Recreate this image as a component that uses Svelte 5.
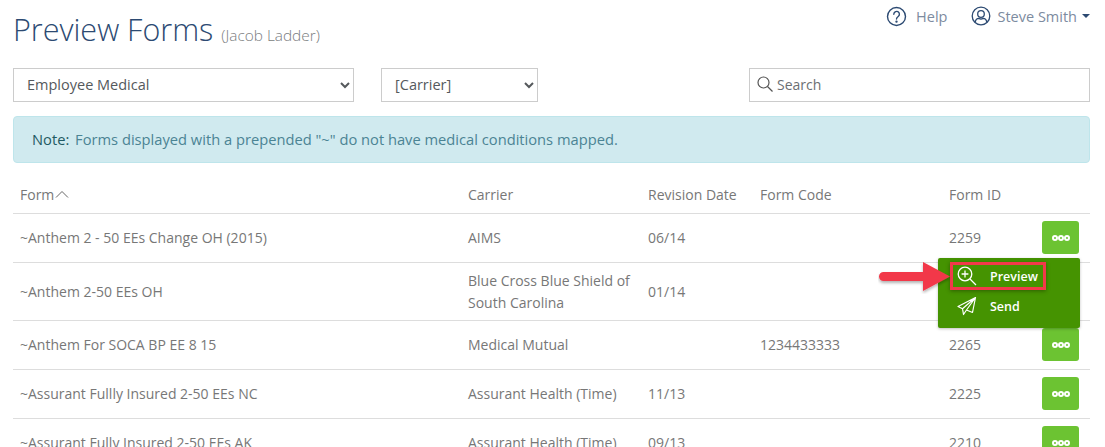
<script>
  const rows = [
    { form: '~Anthem 2 - 50 EEs Change OH (2015)', carrier: 'AIMS', date: '06/14', code: '', id: '2259' },
    { form: '~Anthem 2-50 EEs OH', carrier: 'Blue Cross Blue Shield of South Carolina', date: '01/14', code: '', id: '', open: true },
    { form: '~Anthem For SOCA BP EE 8 15', carrier: 'Medical Mutual', date: '', code: '1234433333', id: '2265' },
    { form: '~Assurant Fullly Insured 2-50 EEs NC', carrier: 'Assurant Health (Time)', date: '11/13', code: '', id: '2225' },
    { form: '~Assurant Fully Insured 2-50 EEs AK', carrier: 'Assurant Health (Time)', date: '09/13', code: '', id: '2210' }
  ];
</script>

<div class="page">
  <header class="top">
    <h1>Preview Forms <small>(Jacob Ladder)</small></h1>
    <nav class="usernav">
      <span class="navitem help">
        <svg width="21" height="21" viewBox="0 0 21 21" fill="none" stroke="#2c4a72" stroke-width="1.4">
          <circle cx="10.5" cy="10.5" r="9" />
          <path d="M7.8 8.2a2.8 2.8 0 1 1 4.4 2.3c-1 .7-1.7 1.2-1.7 2.5" stroke-linecap="round" />
          <circle cx="10.5" cy="15.6" r=".5" fill="#2c4a72" />
        </svg>
        Help
      </span>
      <span class="navitem">
        <svg width="20" height="20" viewBox="0 0 20 20" fill="none" stroke="#2c4a72" stroke-width="1.3">
          <circle cx="10" cy="10" r="8.8" />
          <circle cx="10" cy="8" r="3.3" />
          <path d="M4.2 16c.6-2.6 2.4-3.6 3.6-3.6.8.4 1.400.6 2.200.6s1.400-.2 2.200-.6c1.200 0 3 1 3.600 3.600" />
        </svg>
        Steve Smith<i class="caret"></i>
      </span>
    </nav>
  </header>

  <div class="filters">
    <select class="plan"><option>Employee Medical</option></select>
    <select class="carrier"><option>[Carrier]</option></select>
    <div class="search">
      <svg width="16" height="16" viewBox="0 0 16 16" fill="none" stroke="#555" stroke-width="1.2">
        <circle cx="6.500" cy="6.500" r="5.500" />
        <path d="M10.500 10.500l5 5" />
      </svg>
      <input placeholder="Search" />
    </div>
  </div>

  <div class="note"><b>Note:</b> Forms displayed with a prepended "~" do not have medical conditions mapped.</div>

  <table>
    <colgroup>
      <col style="width:448px" />
      <col style="width:180px" />
      <col style="width:112px" />
      <col style="width:189px" />
      <col style="width:88px" />
      <col />
    </colgroup>
    <thead>
      <tr>
        <th>Form<svg class="sort" width="14" height="8" viewBox="0 0 14 8" fill="none" stroke="#666"><path d="M1 7.500l6-6 6 6" /></svg></th>
        <th>Carrier</th>
        <th>Revision Date</th>
        <th>Form Code</th>
        <th>Form ID</th>
        <th></th>
      </tr>
    </thead>
    <tbody>
      {#each rows as row}
        <tr>
          <td>{row.form}</td>
          <td>{row.carrier}</td>
          <td>{row.date}</td>
          <td>{row.code}</td>
          <td>{row.id}</td>
          <td class="action">
            {#if !row.open}
              <button class="dots" aria-label="Actions"><i></i><i></i><i></i></button>
            {/if}
          </td>
        </tr>
      {/each}
    </tbody>
  </table>

  <div class="menu">
    <div class="menuitem active">
      <svg width="20" height="20" viewBox="0 0 20 20" fill="none" stroke="#fff" stroke-width="1.300">
        <circle cx="8" cy="8" r="6.800" />
        <path d="M8 4.600v6.800M4.600 8h6.800M13 13l6 6" />
      </svg>
      <span>Preview</span>
    </div>
    <div class="menuitem">
      <svg width="20" height="20" viewBox="0 0 20 20" fill="none" stroke="#fff" stroke-width="1.200" stroke-linejoin="round">
        <path d="M18.500 1.500L1 10.500l4.500 2.200L18.500 1.500zM18.500 1.500L15.500 16.500 9.500 14 6.500 18.500 5.500 12.700M9.500 14L18.500 1.500" />
      </svg>
      <span>Send</span>
    </div>
  </div>

  <svg class="arrow" width="75" height="34" viewBox="0 0 75 34">
    <defs>
      <filter id="sh" x="-10%" y="-20%" width="120%" height="150%">
        <feDropShadow dx="0" dy="2" stdDeviation="1.500" flood-color="#000" flood-opacity=".3" />
      </filter>
    </defs>
    <path d="M5.500 12H45V2L72 16.500 45 31V21H5.500a4.500 4.500 0 0 1 0-9z" fill="#f2394a" filter="url(#sh)" />
  </svg>
</div>

<style>
  :global(body) {
    margin: 0;
    background: #fff;
    overflow: hidden;
  }

  .page {
    position: relative;
    width: 1077px;
    height: 447px;
    overflow: hidden;
    padding: 0 15px 0 13px;
    font-family: "Open Sans", sans-serif;
    font-size: 14px;
    color: #777;
  }

  .top {
    display: flex;
    justify-content: space-between;
    align-items: flex-start;
    height: 68px;
  }

  h1 {
    margin: 7px 0 0;
    font-size: 30.5px;
    line-height: 44px;
    font-weight: 300;
    color: #2c4a72;
  }

  small {
    font-size: 15.4px;
    color: #7a7d80;
  }

  .usernav {
    display: flex;
    gap: 24px;
    padding-top: 5px;
    font-size: 14.5px;
    color: #7d8ba0;
  }

  .navitem {
    display: flex;
    align-items: center;
    gap: 6px;
    height: 22px;
  }

  .help {
    gap: 9px;
  }

  .caret {
    width: 0;
    height: 0;
    margin-left: -1px;
    border: 4px solid transparent;
    border-top-color: #2c4a72;
    border-bottom: 0;
  }

  .filters {
    display: flex;
    height: 34px;
    margin-bottom: 14px;
  }

  select,
  .search {
    box-sizing: border-box;
    height: 34px;
    border: 1px solid #ccc;
    background: #fff;
    font: inherit;
    font-size: 14.5px;
    color: #55595c;
  }

  select {
    padding: 0 9px 2px;
  }

  .plan {
    width: 341px;
  }

  .carrier {
    width: 157px;
    margin-left: 27px;
  }

  .search {
    display: flex;
    align-items: center;
    gap: 2px;
    width: 341px;
    margin-left: auto;
    padding: 0 0 2px 7px;
    font-size: 14px;
  }

  .search input {
    flex: 1;
    min-width: 0;
    border: 0;
    outline: 0;
    font: inherit;
  }

  .search input::placeholder {
    color: #6b6f73;
    opacity: 1;
  }

  .note {
    box-sizing: border-box;
    height: 47px;
    margin-bottom: 12px;
    padding: 0 18px;
    line-height: 45px;
    background: #d0eaef;
    border: 1px solid #bee5eb;
    border-radius: 4px;
    font-size: 14.7px;
    color: #4b8494;
  }

  .note b {
    margin-right: 2px;
    font-weight: 500;
    color: #1f5a63;
  }

  table {
    width: 100%;
    table-layout: fixed;
    border-collapse: collapse;
  }

  th {
    height: 38px;
    padding: 0 7px;
    font-weight: 400;
    text-align: left;
    color: #777;
  }

  .sort {
    margin-left: 1px;
    vertical-align: 2px;
  }

  td {
    padding: 6px 7px;
    border-top: 1px solid #ddd;
    line-height: 22px;
    color: #777;
  }

  tbody tr {
    height: 49px;
  }

  tbody tr:nth-child(2) {
    height: 58px;
  }

  .action {
    padding: 0 11px 0 0;
  }

  .dots {
    display: flex;
    align-items: center;
    justify-content: center;
    width: 37px;
    height: 33px;
    margin: -1px 0 0 auto;
    padding: 0;
    border: 0;
    border-radius: 3px;
    background: #6cc332;
  }

  .dots i {
    width: 2px;
    height: 2px;
    border: 2px solid #fff;
    border-radius: 50%;
  }

  .menu {
    position: absolute;
    left: 938px;
    top: 258px;
    box-sizing: border-box;
    width: 142px;
    height: 70px;
    padding: 4px 0 0 12px;
    background: #459301;
    border-radius: 2px;
    box-shadow: 0 1px 3px rgba(0, 0, 0, 0.25);
    color: #fff;
    font-size: 12.5px;
    font-weight: 600;
  }

  .menuitem {
    box-sizing: border-box;
    display: flex;
    align-items: center;
    gap: 13px;
    width: 96px;
    height: 28px;
    padding-left: 4px;
    margin-bottom: 2px;
    border: 3px solid transparent;
  }

  .menuitem svg {
    flex: none;
  }

  .menuitem.active {
    border-color: #f2394a;
    box-shadow: 0 1px 4px rgba(0, 0, 0, 0.35);
  }

  .arrow {
    position: absolute;
    left: 878px;
    top: 260px;
  }
</style>
